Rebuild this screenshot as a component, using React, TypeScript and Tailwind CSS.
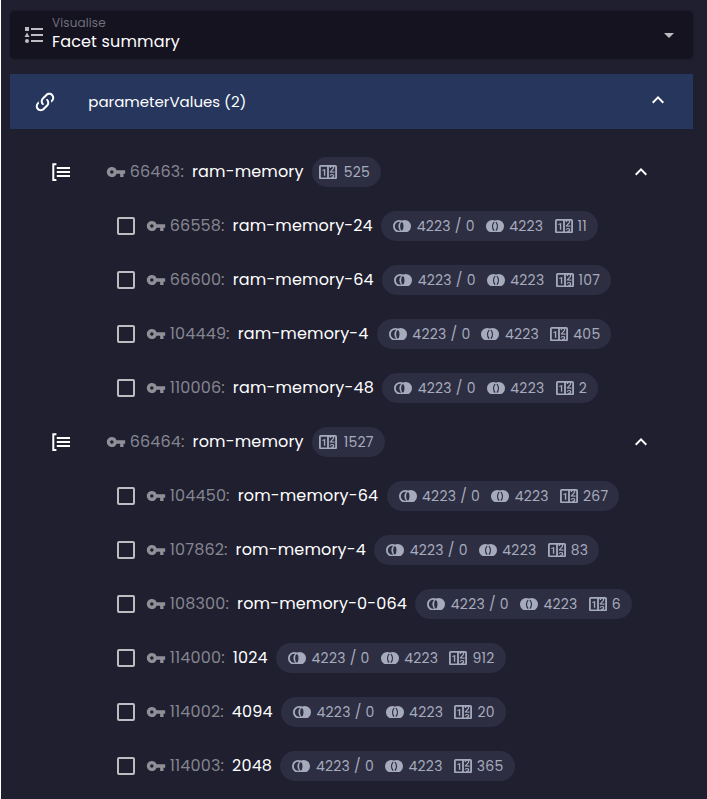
import { MdVpnKey } from "react-icons/md";

function Chevron() {
  return (
    <svg viewBox="0 0 24 24" className="size-6 shrink-0 fill-white">
      <path d="M7.41 15.41 12 10.83l4.59 4.58L18 14l-6-6-6 6z" />
    </svg>
  );
}

function CounterIcon() {
  return (
    <svg viewBox="2 4 20 16" className="h-[14.4px] w-[18px] shrink-0 fill-current">
      <path d="M4,4H20A2,2 0 0,1 22,6V18A2,2 0 0,1 20,20H4A2,2 0 0,1 2,18V6A2,2 0 0,1 4,4M4,6V18H11V6H4M20,18V6H18.76C19,6.54 18.95,7.07 18.95,7.13C18.88,7.8 18.41,8.5 18.24,8.75L15.91,11.3L19.23,11.28L19.24,12.5L14.04,12.47L14,11.47C14,11.47 17.05,8.24 17.2,7.95C17.34,7.67 17.91,6 16.5,6C15.27,6.05 15.41,7.3 15.41,7.3L13.87,7.31C13.87,7.31 13.88,6.65 14.25,6H13V18H15.58L15.57,17.14L16.54,17.13C16.54,17.13 17.45,16.97 17.46,16.08C17.5,15.08 16.65,15.08 16.5,15.08C16.37,15.08 15.43,15.13 15.43,15.95H13.91C13.91,15.95 13.95,13.89 16.5,13.89C19.1,13.89 18.96,15.91 18.96,15.91C18.96,15.91 19,17.16 17.85,17.63L18.37,18H20M8.92,16H7.42V10.2L5.62,10.76V9.53L8.76,8.41H8.92V16Z" />
    </svg>
  );
}

function SetRightIcon() {
  return (
    <svg viewBox="2 5 20 14" className="h-[12.6px] w-[18px] shrink-0">
      <circle cx="15" cy="12" r="7" className="fill-current" />
      <circle cx="9" cy="12" r="6" className="fill-none stroke-current stroke-2" />
      <ellipse cx="11.8" cy="12" rx="1.8" ry="4.6" className="fill-[#2e2e42]" />
    </svg>
  );
}

function SetAllIcon() {
  return (
    <svg viewBox="2 5 20 14" className="h-[12.6px] w-[18px] shrink-0">
      <circle cx="9" cy="12" r="7" className="fill-current" />
      <circle cx="15" cy="12" r="7" className="fill-current" />
      <path d="M11 7.2q-3.6 4.8 0 9.6M13 7.2q3.6 4.8 0 9.6" className="fill-none stroke-[#2e2e42] stroke-[1.3]" />
    </svg>
  );
}

type Leaf = { id: string; name: string; count: string };

const ram: Leaf[] = [
  { id: "66558:", name: "ram-memory-24", count: "11" },
  { id: "66600:", name: "ram-memory-64", count: "107" },
  { id: "104449:", name: "ram-memory-4", count: "405" },
  { id: "110006:", name: "ram-memory-48", count: "2" },
];

const rom: Leaf[] = [
  { id: "104450:", name: "rom-memory-64", count: "267" },
  { id: "107862:", name: "rom-memory-4", count: "83" },
  { id: "108300:", name: "rom-memory-0-064", count: "6" },
  { id: "114000:", name: "1024", count: "912" },
  { id: "114002:", name: "4094", count: "20" },
  { id: "114003:", name: "2048", count: "365" },
];

function LeafRow({ item }: { item: Leaf }) {
  return (
    <div className="flex h-[54px] items-center whitespace-nowrap pl-[116px] text-[16px] tracking-[0.15px]">
      <div className="size-[18px] shrink-0 rounded-[2px] border-2 border-[#bcbcc1]" />
      <MdVpnKey className="ml-[10.6px] size-5 shrink-0 text-[#8f8f97]" />
      <span className="ml-[4.2px] text-[#85858e]">{item.id}</span>
      <span className="ml-[8px] text-white">{item.name}</span>
      <div className="ml-[8.3px] flex h-[30px] shrink-0 items-center rounded-full bg-[#2e2e42] pl-[12px] pr-[11px] text-[14px] tracking-[0.25px] text-[#a5abbd]">
        <SetRightIcon />
        <span className="ml-[5.5px]">4223 / 0</span>
        <span className="ml-[11px] flex"><SetAllIcon /></span>
        <span className="ml-[5.5px]">4223</span>
        <span className="ml-[11.2px] flex"><CounterIcon /></span>
        <span className="ml-[5px]">{item.count}</span>
      </div>
    </div>
  );
}

function GroupRow({ id, name, count }: { id: string; name: string; count: string }) {
  return (
    <div className="flex h-[54px] items-center whitespace-nowrap pl-[48px] pr-[54px] text-[16px] tracking-[0.15px]">
      <svg viewBox="0 0 24 24" className="size-6 shrink-0 fill-none stroke-white stroke-2">
        <path d="M7.4 4.2H4.3v15.8h3.1M7.8 8H21M7.8 12H21M7.8 16H21" />
      </svg>
      <MdVpnKey className="ml-[32.7px] size-5 shrink-0 text-[#8f8f97]" />
      <span className="ml-[4px] text-[#85858e]">{id}</span>
      <span className="ml-[8px] text-white">{name}</span>
      <div className="ml-[8px] flex h-[30px] items-center rounded-full bg-[#2e2e42] pl-[7px] pr-[11px] text-[14px] tracking-[0.25px] text-[#a5abbd]">
        <CounterIcon />
        <span className="ml-[7px]">{count}</span>
      </div>
      <div className="ml-auto"><Chevron /></div>
    </div>
  );
}

export default function App() {
  return (
    <div className="h-[799px] w-[707px] overflow-hidden border-l border-white bg-[#1f1f30] font-['Poppins','Inter',sans-serif]">
      <div className="pl-[9px] pr-[14px] pt-[11px]">
        <div className="flex h-12 items-center rounded-[5px] bg-[#14131f] pl-3 pr-3 shadow-[0_0_2px_#14131f]">
          <svg viewBox="0 0 24 24" className="size-6 shrink-0 fill-[#bcbcc1]">
            <path d="M5,9.5L7.5,14H2.5L5,9.5M3,4H7V8H3V4M5,20A2,2 0 0,0 7,18A2,2 0 0,0 5,16A2,2 0 0,0 3,18A2,2 0 0,0 5,20M9,5V7H21V5H9M9,19H21V17H9V19M9,13H21V11H9V13Z" />
          </svg>
          <div className="ml-[6px] flex flex-col pb-[2px]">
            <span className="text-[12px] leading-[16px] tracking-[0.11px] text-[#6f6f7c]">Visualise</span>
            <span className="text-[16px] leading-[22px] tracking-[0.15px] text-white">Facet summary</span>
          </div>
          <svg viewBox="0 0 24 24" className="ml-auto size-6 fill-[#bcbcc1]">
            <path d="m7 10 5 5 5-5z" />
          </svg>
        </div>
        <div className="mt-[15px] flex h-[55px] items-center bg-[#26365d] pl-[23px] pr-[23px]">
          <svg viewBox="0 0 24 24" className="size-6 shrink-0 fill-white">
            <path d="M10.59,13.41C11,13.8 11,14.44 10.59,14.83C10.2,15.22 9.56,15.22 9.17,14.83C7.22,12.88 7.22,9.71 9.17,7.76V7.76L12.71,4.22C14.66,2.27 17.83,2.27 19.78,4.22C21.73,6.17 21.73,9.34 19.78,11.29L18.29,12.78C18.3,11.96 18.17,11.14 17.89,10.36L18.36,9.88C19.54,8.71 19.54,6.81 18.36,5.64C17.19,4.46 15.29,4.46 14.12,5.64L10.59,9.17C9.41,10.34 9.41,12.24 10.59,13.41M13.41,9.17C13.8,8.78 14.44,8.78 14.83,9.17C16.78,11.12 16.78,14.29 14.83,16.24V16.24L11.29,19.78C9.34,21.73 6.17,21.73 4.22,19.78C2.27,17.83 2.27,14.66 4.22,12.71L5.71,11.22C5.7,12.04 5.83,12.86 6.11,13.65L5.64,14.12C4.46,15.29 4.46,17.19 5.64,18.36C6.81,19.54 8.71,19.54 9.88,18.36L13.41,14.83C14.59,13.66 14.59,11.76 13.41,10.59C13,10.2 13,9.56 13.41,9.17Z" />
          </svg>
          <span className="ml-[31.3px] pt-[2px] text-[15px] text-white">parameterValues (2)</span>
          <div className="ml-auto h-[27px]"><Chevron /></div>
        </div>
      </div>
      <div className="pt-4">
        <GroupRow id="66463:" name="ram-memory" count="525" />
        {ram.map((item) => <LeafRow key={item.id} item={item} />)}
        <GroupRow id="66464:" name="rom-memory" count="1527" />
        {rom.map((item) => <LeafRow key={item.id} item={item} />)}
      </div>
    </div>
  );
}
